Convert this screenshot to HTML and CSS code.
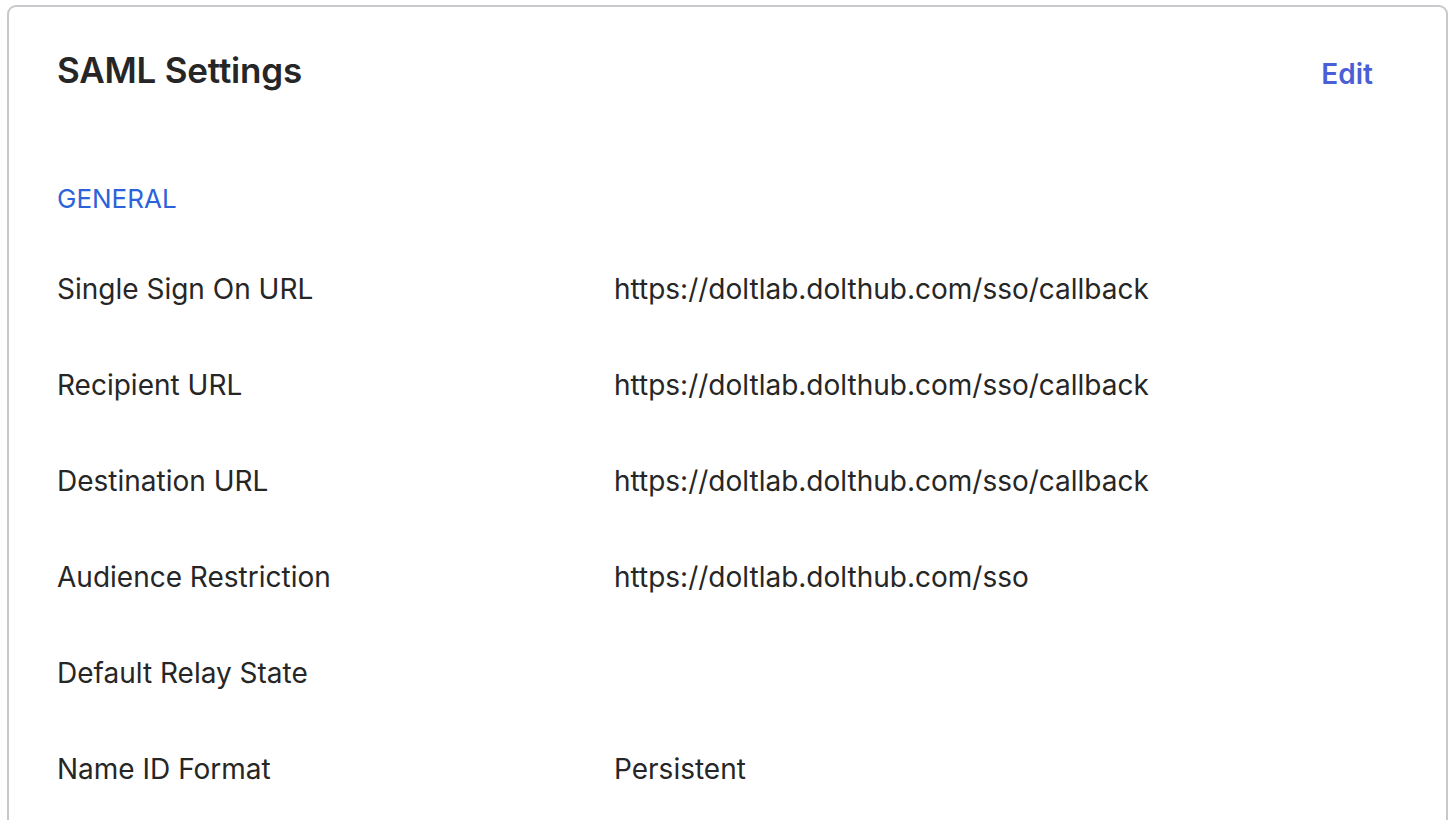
FILE: index.html
```html
<!DOCTYPE html>
<html>
<head>
<meta charset="utf-8">
<link rel="stylesheet" href="styles.css">
</head>
<body>
<div class="card">
  <div class="card-header">
    <h2 class="title">SAML Settings</h2>
    <a class="edit" href="#">Edit</a>
  </div>
  <div class="section-label">GENERAL</div>
  <dl class="rows">
    <div class="row"><dt>Single Sign On URL</dt><dd>https://doltlab.dolthub.com/sso/callback</dd></div>
    <div class="row"><dt>Recipient URL</dt><dd>https://doltlab.dolthub.com/sso/callback</dd></div>
    <div class="row"><dt>Destination URL</dt><dd>https://doltlab.dolthub.com/sso/callback</dd></div>
    <div class="row"><dt>Audience Restriction</dt><dd>https://doltlab.dolthub.com/sso</dd></div>
    <div class="row"><dt>Default Relay State</dt><dd></dd></div>
    <div class="row"><dt>Name ID Format</dt><dd>Persistent</dd></div>
  </dl>
</div>
</body>
</html>
```
FILE: styles.css
```css
html, body {
  margin: 0;
  padding: 0;
  background: #ffffff;
  height: 100%;
  overflow: hidden;
}
body {
  padding: 5px 6px 0 7px;
  box-sizing: border-box;
  font-family: Inter, "Noto Sans", sans-serif;
  color: #262626;
}
.card {
  border: 2px solid #c9c9cd;
  border-bottom: none;
  border-radius: 9px 9px 0 0;
  padding: 35px 73px 0 48px;
  height: 100%;
  box-sizing: border-box;
  overflow: hidden;
}
.card-header {
  display: flex;
  justify-content: space-between;
  align-items: flex-start;
}
.title {
  margin: 0;
  font-size: 35px;
  font-weight: 600;
  line-height: 56px;
  letter-spacing: -0.2px;
}
.edit {
  font-size: 28px;
  font-weight: 600;
  color: #4a5fd6;
  text-decoration: none;
  line-height: 34px;
  margin-top: 15px;
}
.section-label {
  margin-top: 84px;
  font-size: 26px;
  color: #2d63d8;
  line-height: 34px;
}
.rows {
  margin: 56px 0 0;
  display: flex;
  flex-direction: column;
  gap: 62px;
}
.row {
  display: grid;
  grid-template-columns: 557px 1fr;
  font-size: 28px;
  line-height: 34px;
}
.row dt, .row dd {
  margin: 0;
  min-height: 34px;
}
```
